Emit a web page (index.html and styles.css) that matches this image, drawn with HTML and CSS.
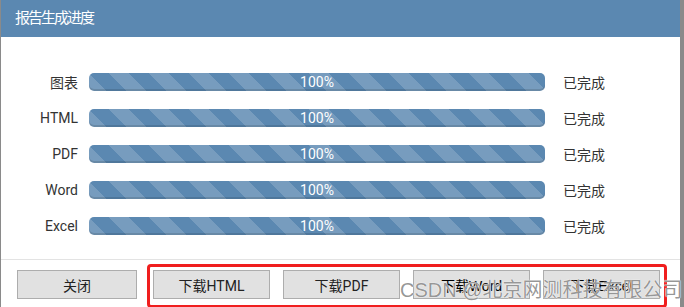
FILE: index.html
```html
<!DOCTYPE html>
<html lang="zh">
<head>
  <meta charset="UTF-8">
  <title>报告生成进度</title>
  <link rel="stylesheet" href="styles.css">
</head>
<body>
  <div class="dialog">
    <div class="dialog-header">报告生成进度</div>
    <div class="dialog-body">
      <div class="row">
        <span class="label">图表</span>
        <div class="bar"><span>100%</span></div>
        <span class="status">已完成</span>
      </div>
      <div class="row">
        <span class="label">HTML</span>
        <div class="bar"><span>100%</span></div>
        <span class="status">已完成</span>
      </div>
      <div class="row">
        <span class="label">PDF</span>
        <div class="bar"><span>100%</span></div>
        <span class="status">已完成</span>
      </div>
      <div class="row">
        <span class="label">Word</span>
        <div class="bar"><span>100%</span></div>
        <span class="status">已完成</span>
      </div>
      <div class="row">
        <span class="label">Excel</span>
        <div class="bar"><span>100%</span></div>
        <span class="status">已完成</span>
      </div>
    </div>
    <div class="dialog-footer">
      <button class="btn btn-close">关闭</button>
      <button class="btn">下载HTML</button>
      <button class="btn">下载PDF</button>
      <button class="btn btn-plain">下载Word</button>
      <button class="btn btn-plain">下载Excel</button>
    </div>
    <div class="highlight"></div>
    <div class="watermark">CSDN @北京网测科技有限公司</div>
  </div>
</body>
</html>
```

FILE: styles.css
```css
body {
  margin: 0;
  background: #8a8a8a;
  font-family: Roboto, "Noto Sans CJK SC", sans-serif;
  color: #333;
  overflow: hidden;
}

.dialog {
  position: relative;
  margin-left: 1px;
  width: 679px;
  height: 307px;
  background: #fff;
}

.dialog-header {
  height: 37px;
  line-height: 37px;
  padding-left: 14px;
  background: #5b88b1;
  color: #fff;
  font-size: 15px;
  letter-spacing: -2px;
}

.dialog-body {
  padding: 27px 0 15px;
}

.row {
  display: grid;
  grid-template-columns: 77px 456px auto;
  column-gap: 11px;
  align-items: center;
  height: 36px;
  font-size: 14px;
}

.label {
  text-align: right;
}

.status {
  margin-left: 7px;
}

/* striped progress bar */
.bar {
  height: 18px;
  line-height: 18px;
  border-radius: 5px;
  background-color: #5b88b1;
  background-image: linear-gradient(45deg,
    rgba(255, 255, 255, 0.17) 25%, transparent 25%,
    transparent 50%, rgba(255, 255, 255, 0.17) 50%,
    rgba(255, 255, 255, 0.17) 75%, transparent 75%, transparent);
  background-size: 40px 40px;
  background-position: 20px 0;
  box-shadow: inset 0 -2px 0 rgba(0, 0, 0, 0.12);
  color: #fff;
  font-size: 14px;
  text-align: center;
}

.dialog-footer {
  display: flex;
  gap: 13px;
  border-top: 1px solid #e3e3e3;
  padding: 10px 0 0 16px;
}

.btn {
  width: 117px;
  height: 29px;
  padding: 0;
  background: #e1e1e1;
  border: 1px solid #adadad;
  font-family: Roboto, "Noto Sans CJK SC", sans-serif;
  font-size: 14px;
  color: #222;
}

.btn-close {
  width: 120px;
  margin-right: 3px;
}

.btn-plain {
  font-family: "Liberation Sans", "Noto Sans CJK SC", sans-serif;
  color: #000;
}

.highlight {
  position: absolute;
  left: 146px;
  top: 264px;
  width: 514px;
  height: 38px;
  border: 3px solid #f01e1e;
  border-radius: 4px;
}

.watermark {
  position: absolute;
  left: 399px;
  top: 274px;
  font-family: "Liberation Sans", "Noto Sans CJK SC", sans-serif;
  font-size: 20px;
  color: rgba(80, 80, 80, 0.6);
  text-shadow: 0 0 1px #fff, 0 0 1px #fff;
  white-space: nowrap;
}
```
